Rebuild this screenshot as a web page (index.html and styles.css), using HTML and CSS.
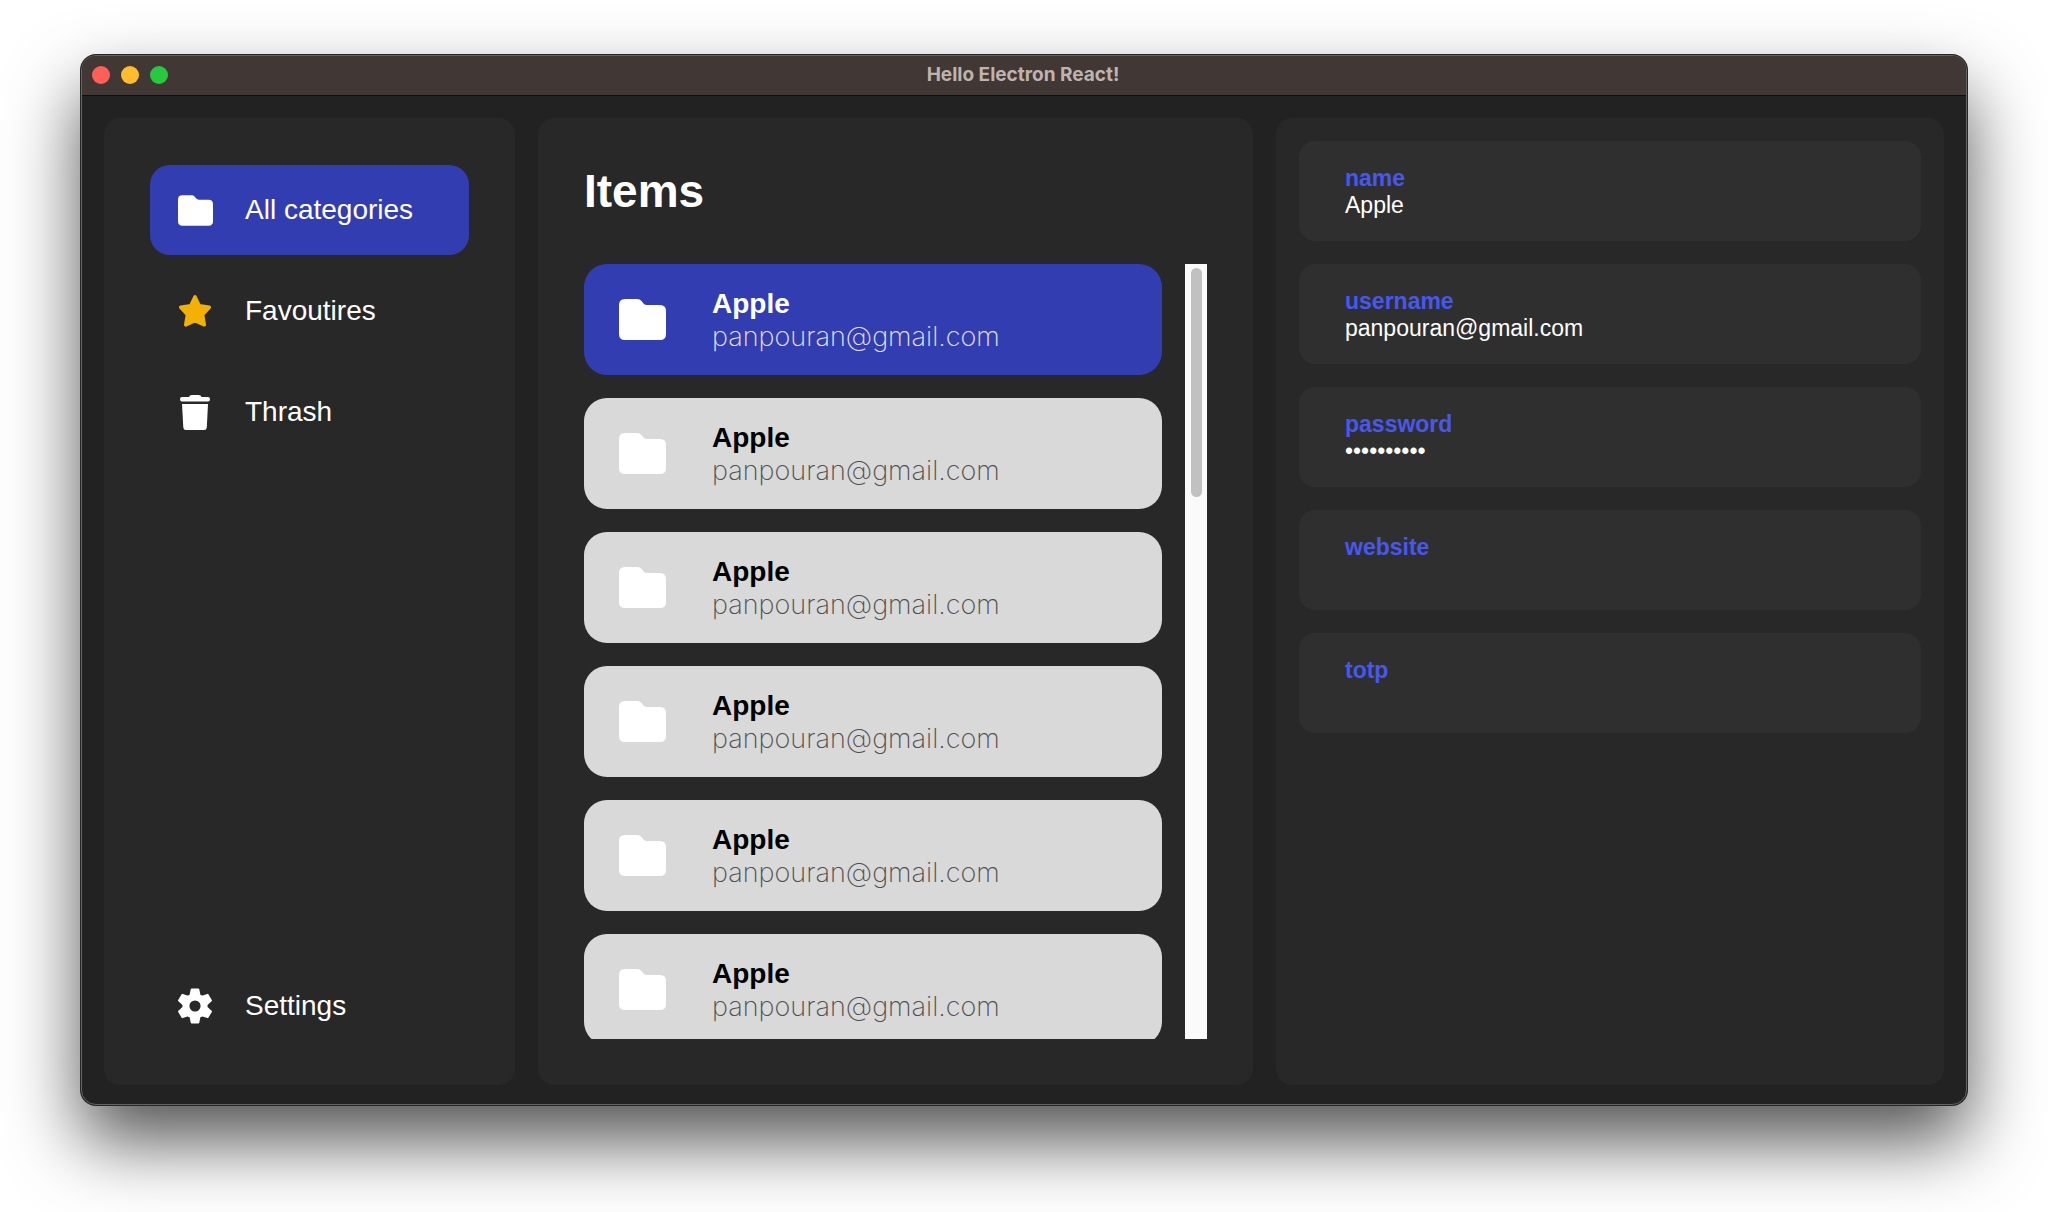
FILE: index.html
```html
<!DOCTYPE html>
<html lang="en">
<head>
<meta charset="utf-8">
<title>Hello Electron React!</title>
<link rel="stylesheet" href="styles.css">
</head>
<body>
<svg class="defs" aria-hidden="true">
  <symbol id="folder" viewBox="0 0 47 41"><path d="M6 0H18Q21 0 22.500 2L24.500 4.500Q25.800 6 28 6H41Q47 6 47 12V35Q47 41 41 41H6Q0 41 0 35V6Q0 0 6 0Z"/></symbol>
  <symbol id="star" viewBox="0 0 32 32"><path d="M16 1.800 20.300 10.700 30.300 12.300 23.600 19.600 25.300 29.900 16 25.600 6.700 29.900 8.400 19.600 1.700 12.300 11.700 10.700Z" stroke="currentColor" stroke-width="3.400" stroke-linejoin="round"/></symbol>
  <symbol id="trash" viewBox="0 0 30 35"><path d="M9 2Q9.500 0 12 0H18.500Q21 0 21.500 2H28Q30 2 30 4.300T28 6.600H2Q0 6.600 0 4.300T2 2ZM2 9H28L26.800 32.500Q26.600 35 24 35H6Q3.500 35 3.300 32.500Z"/></symbol>
  <symbol id="gear" viewBox="-17 -18 34 36">
    <circle r="9.100" fill="none" stroke="currentColor" stroke-width="7"/>
    <g stroke="currentColor" stroke-width="2" stroke-linejoin="round">
      <path id="tooth" d="M-3.300-16.500H3.300L4.300-11.500 3-9H-3L-4.300-11.500Z"/>
      <use href="#tooth" transform="rotate(60)"/><use href="#tooth" transform="rotate(120)"/><use href="#tooth" transform="rotate(180)"/><use href="#tooth" transform="rotate(240)"/><use href="#tooth" transform="rotate(300)"/>
    </g>
  </symbol>
</svg>
<div class="window">
  <header class="titlebar">
    <div class="lights">
      <button class="light close" aria-label="Close"></button>
      <button class="light minimize" aria-label="Minimize"></button>
      <button class="light zoom" aria-label="Zoom"></button>
    </div>
    <span class="title">Hello Electron React!</span>
  </header>
  <main class="content">
    <nav class="panel sidebar">
      <button class="nav-item active"><span class="slot"><svg class="i-folder"><use href="#folder"/></svg></span>All categories</button>
      <button class="nav-item"><span class="slot"><svg class="i-star"><use href="#star"/></svg></span>Favoutires</button>
      <button class="nav-item"><span class="slot"><svg class="i-trash"><use href="#trash"/></svg></span>Thrash</button>
      <button class="nav-item settings"><span class="slot"><svg class="i-gear"><use href="#gear"/></svg></span>Settings</button>
    </nav>
    <section class="panel items">
      <h1>Items</h1>
      <div class="scroll-area">
        <div class="list">
          <button class="item selected"><svg><use href="#folder"/></svg><span class="text"><strong>Apple</strong><span class="mail">panpouran@gmail.com</span></span></button>
          <button class="item"><svg><use href="#folder"/></svg><span class="text"><strong>Apple</strong><span class="mail">panpouran@gmail.com</span></span></button>
          <button class="item"><svg><use href="#folder"/></svg><span class="text"><strong>Apple</strong><span class="mail">panpouran@gmail.com</span></span></button>
          <button class="item"><svg><use href="#folder"/></svg><span class="text"><strong>Apple</strong><span class="mail">panpouran@gmail.com</span></span></button>
          <button class="item"><svg><use href="#folder"/></svg><span class="text"><strong>Apple</strong><span class="mail">panpouran@gmail.com</span></span></button>
          <button class="item"><svg><use href="#folder"/></svg><span class="text"><strong>Apple</strong><span class="mail">panpouran@gmail.com</span></span></button>
        </div>
        <div class="track"><div class="thumb"></div></div>
      </div>
    </section>
    <dl class="panel details">
      <div class="field"><dt>name</dt><dd>Apple</dd></div>
      <div class="field"><dt>username</dt><dd>panpouran@gmail.com</dd></div>
      <div class="field"><dt>password</dt><dd>••••••••••</dd></div>
      <div class="field"><dt>website</dt><dd></dd></div>
      <div class="field"><dt>totp</dt><dd></dd></div>
    </dl>
  </main>
</div>
</body>
</html>
```
FILE: styles.css
```css
* { box-sizing: border-box; }

body {
  margin: 0;
  height: 100vh;
  padding: 55px 81px 107px;
  display: flex;
  background: #fff;
  color: #fff;
  font-family: "Liberation Sans", Arial, sans-serif;
}

button {
  border: 0;
  padding: 0;
  margin: 0;
  background: none;
  color: inherit;
  font: inherit;
  text-align: left;
}

svg { display: block; fill: currentColor; }
.defs { display: none; }

.window {
  flex: 1;
  min-width: 0;
  display: flex;
  flex-direction: column;
  overflow: hidden;
  border: 1px solid #636363;
  border-radius: 15px;
  background: #222;
  box-shadow: 0 0 0 1px #262626, 0 36px 72px rgba(0, 0, 0, 0.68);
}

.titlebar {
  display: grid;
  grid-template-columns: 1fr auto 1fr;
  align-items: center;
  height: 40px;
  padding: 0 12px 2px 10px;
  background: #413735;
  border-bottom: 1px solid #0f0d0d;
}

.lights { display: flex; gap: 11px; }
.light { width: 18px; height: 18px; border-radius: 50%; }
.close { background: #ff5f57; }
.minimize { background: #febc2e; }
.zoom { background: #28c840; }

.title {
  font: 700 19px/24px Inter, sans-serif;
  color: #bfb3b0;
}

.content {
  flex: 1;
  min-height: 0;
  display: grid;
  grid-template-columns: 411px 715fr 668fr;
  grid-template-rows: minmax(0, 1fr);
  gap: 23px;
  padding: 22px 22px 19px;
}

.panel {
  margin: 0;
  min-width: 0;
  display: flex;
  flex-direction: column;
  border-radius: 16px;
  background: #282828;
}

.sidebar { padding: 47px 46px 34px; gap: 11px; }

.nav-item {
  display: flex;
  align-items: center;
  gap: 28px;
  height: 90px;
  padding: 0 23px;
  border-radius: 20px;
  font-size: 28px;
}
.nav-item.active { background: #333db2; }
.settings { margin-top: auto; }
.slot { width: 44px; display: flex; justify-content: center; }
.i-folder { width: 35px; height: 31px; }
.i-star { width: 32px; height: 32px; color: #f2b104; }
.i-trash { width: 30px; height: 35px; }
.i-gear { width: 34px; height: 36px; }

.items { padding: 46px; }
h1 {
  margin: 0 0 46px;
  font-size: 46px;
  line-height: 54px;
}

.scroll-area { flex: 1; min-height: 0; display: flex; gap: 23px; }
.list {
  flex: 1;
  display: flex;
  flex-direction: column;
  gap: 23px;
  overflow: hidden;
}
.item {
  flex: none;
  display: flex;
  align-items: center;
  gap: 46px;
  height: 111px;
  padding: 0 35px;
  border-radius: 23px;
  background: #d9d9d9;
  font-size: 28px;
  line-height: 33px;
}
.item svg { width: 47px; height: 41px; color: #fff; }
.text { display: flex; flex-direction: column; }
.text strong { color: #000; }
.mail { color: #505050; font-family: Inter, sans-serif; font-weight: 200; font-size: 27px; }
.selected { background: #333db2; }
.selected strong { color: #fff; }
.selected .mail { color: #e6e6e6; }

.track { width: 22px; padding: 4px 5px 4px 6px; background: #fafafa; }
.thumb { height: 229px; border-radius: 6px; background: #c1c1c1; }

.details { padding: 23px; gap: 23px; }
.field {
  height: 100px;
  padding: 24px 46px 0;
  border-radius: 16px;
  background: #2f2f2f;
  font-size: 23px;
  line-height: 27px;
}
dt { font-weight: bold; color: #4758ee; }
dd { margin: 0; }
```
